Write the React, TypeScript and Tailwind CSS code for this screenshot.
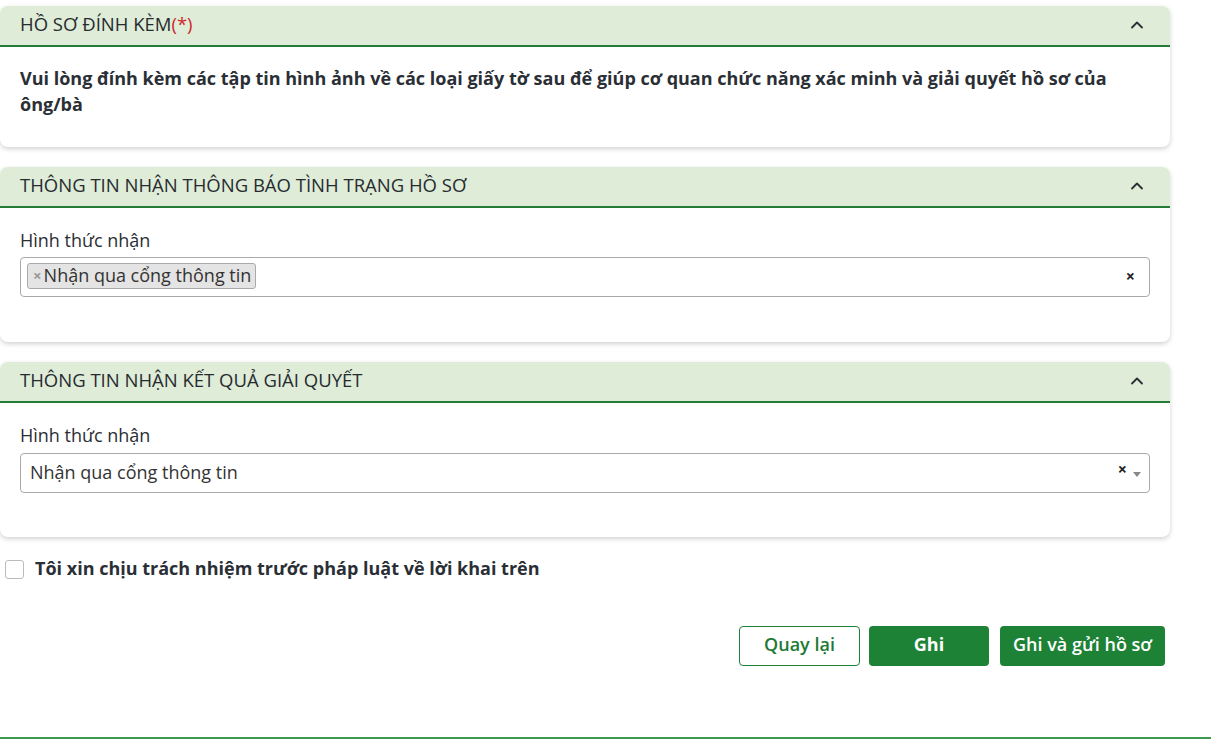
import { ChevronUp } from "lucide-react";

const font = { fontFamily: '"Open Sans", "Noto Sans", sans-serif' };

const Card = ({ title, children }: { title: React.ReactNode; children: React.ReactNode }) => (
  <div className="w-[1170px] rounded-lg bg-white shadow-[0_2px_5px_rgba(0,0,0,0.18)]">
    <div className="flex h-[41px] items-center justify-between rounded-t-lg border-b-2 border-[#237b35] bg-[#dfecd7] pl-5 pr-[23px]">
      <span className="-mt-[3px] text-[18.5px] font-medium uppercase text-[#262b30]">{title}</span>
      <ChevronUp className="-mt-[2px] h-[20px] w-[20px] text-[#2a2f35]" strokeWidth={2.2} />
    </div>
    {children}
  </div>
);

const App = () => {
  return (
    <div className="relative h-[739px] w-[1211px] overflow-hidden bg-white" style={font}>
      <div className="flex flex-col gap-5 pt-[6px]">
        {/* Hồ sơ đính kèm */}
        <Card
          title={
            <>
              HỒ SƠ ĐÍNH KÈM<span className="text-[#d0282d]">(*)</span>
            </>
          }
        >
          <div className="px-5 pb-[30px] pt-[18px] text-[18px] font-bold leading-[26px] text-[#2a2f35]">
            Vui lòng đính kèm các tập tin hình ảnh về các loại giấy tờ sau để giúp cơ quan chức năng xác minh và giải quyết hồ sơ của ông/bà
          </div>
        </Card>

        {/* Thông tin nhận thông báo */}
        <Card title="THÔNG TIN NHẬN THÔNG BÁO TÌNH TRẠNG HỒ SƠ">
          <div className="px-5 pb-[45px] pt-[19px]">
            <div className="mb-[4px] text-[18px] leading-[26px] text-[#2a2f35]">Hình thức nhận</div>
            <div className="flex h-[40px] w-[1130px] items-center justify-between rounded border border-[#aaaaaa] pl-[6px] pr-[14px]">
              <span className="-mt-[3px] flex h-[26px] items-center rounded-[3px] border border-[#aaaaaa] bg-[#e4e4e4] pl-[5px] pr-[4px] text-[18px] text-[#333]">
                <span className="mr-[2px] text-[15px] font-bold text-[#999]">×</span>
                Nhận qua cổng thông tin
              </span>
              <span className="-mt-[3px] text-[16px] font-bold text-[#222]">×</span>
            </div>
          </div>
        </Card>

        {/* Thông tin nhận kết quả */}
        <Card title="THÔNG TIN NHẬN KẾT QUẢ GIẢI QUYẾT">
          <div className="px-5 pb-[44px] pt-[19px]">
            <div className="mb-[5px] text-[18px] leading-[26px] text-[#2a2f35]">Hình thức nhận</div>
            <div className="flex h-[40px] w-[1130px] items-center justify-between rounded border border-[#aaaaaa] pl-[9px] pr-[8px]">
              <span className="-mt-[2px] text-[18px] text-[#333]">Nhận qua cổng thông tin</span>
              <span className="flex items-center gap-[6px]">
                <span className="-mt-[8px] text-[16px] font-bold text-[#222]">×</span>
                <span className="mt-[2px] h-0 w-0 border-x-[4px] border-t-[5px] border-x-transparent border-t-[#888]" />
              </span>
            </div>
          </div>
        </Card>
      </div>

      {/* Cam kết */}
      <label className="mt-[20px] flex items-center gap-[11px] pl-[5px]">
        <span className="h-[19px] w-[19px] rounded-[3px] border border-[#bbbbbb] bg-white" />
        <span className="-mt-[2px] text-[18px] font-bold text-[#2a2f35]">Tôi xin chịu trách nhiệm trước pháp luật về lời khai trên</span>
      </label>

      {/* Buttons */}
      <div className="mt-[44px] flex w-[1165px] justify-end gap-[9px]">
        <button className="h-[40px] w-[121px] rounded border border-[#1e8236] bg-white pb-[3px] text-[18px] font-semibold text-[#1e7a34]">
          Quay lại
        </button>
        <button className="h-[40px] w-[120px] rounded bg-[#1e8236] pb-[3px] text-[18px] font-bold text-white">Ghi</button>
        <button className="ml-[2px] h-[40px] w-[165px] rounded bg-[#1e8236] pb-[3px] text-[18px] font-semibold text-white">
          Ghi và gửi hồ sơ
        </button>
      </div>

      <div className="absolute bottom-0 left-0 h-[2px] w-full bg-[#3c9a4e]" />
    </div>
  );
};

export default App;
